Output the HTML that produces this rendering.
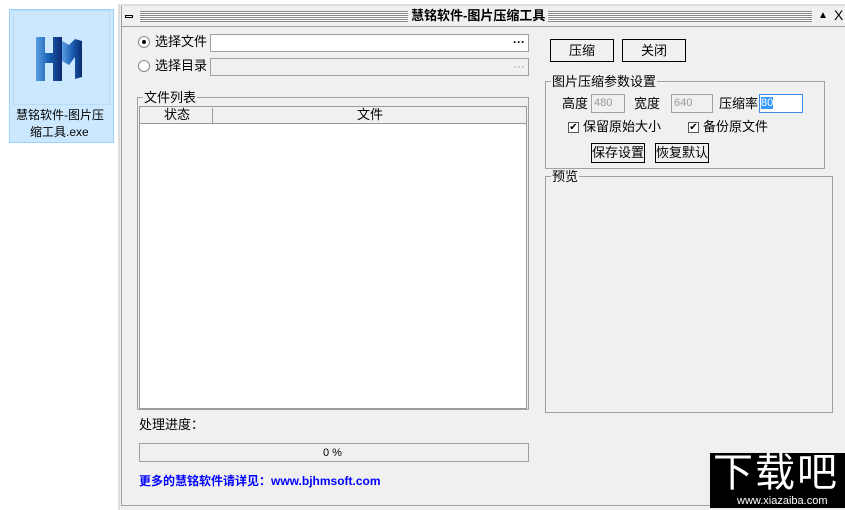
<!DOCTYPE html>
<html><head><meta charset="utf-8"><style>
*{margin:0;padding:0;box-sizing:border-box}
body{width:845px;height:508px;background:#fff;position:relative;overflow:hidden;font-family:"Liberation Sans","Noto Sans CJK SC",sans-serif;font-size:12px;color:#000}
.a{position:absolute}
.t{position:absolute;white-space:nowrap;line-height:14px}
.inp{position:absolute;background:#fff;border:1px solid #a0a0a0}
.btn{position:absolute;border:1px solid #000;background:#f0f0f0;text-align:center}
.hatch{position:absolute;height:11px;background:repeating-linear-gradient(#888 0 1px,#fff 1px 2px)}
.cb{position:absolute;width:11px;height:11px;border:1px solid #555;background:#fff;font-size:10px;line-height:9px;text-align:center}
</style></head><body>
<div class="a" style="left:9px;top:9px;width:105px;height:134px;background:#cce8ff;border:1px solid #99d1ff"></div>
<div class="a" style="left:13px;top:10px;width:97px;height:95px;border:1px solid #b9dcf4"></div>
<svg class="a" style="left:34px;top:35px" width="50" height="48" viewBox="0 0 50 48">
<defs><linearGradient id="g" x1="0" x2="1"><stop offset="0" stop-color="#5aa0e0"/><stop offset="0.5" stop-color="#1a5fb4"/><stop offset="1" stop-color="#0a2a70"/></linearGradient></defs>
<path d="M2 2h9v16h8V2h9v44h-9V28h-8v18H2z" fill="url(#g)"/>
<path d="M28 6l7 4 6-6 7 2v36l-7 2V22l-6 8-7-4z" fill="url(#g)"/>
</svg>
<div class="t" style="left:16px;top:108px;font-size:12px">慧铭软件-图片压</div>
<div class="t" style="left:30px;top:125px">缩工具.exe</div>

<div class="a" style="left:118px;top:4px;width:740px;height:506px;background:#f0f0f0;border-left:2px solid #ddd;border-top:2px solid #ddd"></div>
<div class="a" style="left:121px;top:6px;width:730px;height:500px;border-left:1px solid #a0a0a0;border-bottom:1px solid #a0a0a0"></div>
<div class="a" style="left:125px;top:15px;width:8px;height:3px;border:1px solid #000"></div>
<div class="hatch" style="left:140px;top:11px;width:268px"></div>
<div class="t" style="left:411px;top:9px;font-weight:bold;font-size:13px">慧铭软件-图片压缩工具</div>
<div class="hatch" style="left:548px;top:11px;width:264px"></div>
<div class="t" style="left:818px;top:9px;font-size:10px">▲</div>
<div class="t" style="left:834px;top:8px;font-size:14px">X</div>
<div class="a" style="left:122px;top:26px;width:730px;height:1px;background:#a0a0a0"></div>

<div class="a" style="left:138px;top:36px;width:12px;height:12px;border-radius:50%;border:1px solid #888;background:#fff"><div class="a" style="left:3px;top:3px;width:4px;height:4px;border-radius:50%;background:#000"></div></div>
<div class="t" style="left:155px;top:35px;font-size:13px">选择文件</div>
<div class="inp" style="left:210px;top:34px;width:319px;height:18px"></div>
<div class="t" style="left:513px;top:35px;font-weight:bold">···</div>
<div class="a" style="left:138px;top:60px;width:12px;height:12px;border-radius:50%;border:1px solid #888;background:#fff"></div>
<div class="t" style="left:155px;top:59px;font-size:13px">选择目录</div>
<div class="inp" style="left:210px;top:58px;width:319px;height:18px;background:#f0f0f0"></div>
<div class="t" style="left:513px;top:59px;color:#999">···</div>

<div class="a" style="left:137px;top:97px;width:392px;height:313px;border:1px solid #a0a0a0"></div>
<div class="t" style="left:143px;top:91px;background:#f0f0f0;font-size:13px;padding:0 1px">文件列表</div>
<div class="a" style="left:139px;top:106px;width:388px;height:303px;background:#fff;border:1px solid #999"></div>
<div class="a" style="left:140px;top:107px;width:386px;height:17px;background:#f0f0f0;border-bottom:1px solid #999"></div>
<div class="a" style="left:212px;top:108px;width:1px;height:15px;background:#999"></div>
<div class="t" style="left:164px;top:108px;font-size:13px">状态</div>
<div class="t" style="left:357px;top:108px;font-size:13px">文件</div>

<div class="t" style="left:139px;top:418px;font-size:13px">处理进度：</div>
<div class="a" style="left:139px;top:443px;width:390px;height:19px;border:1px solid #a0a0a0"></div>
<div class="t" style="left:323px;top:446px;font-size:11px">0 %</div>
<div class="t" style="left:139px;top:474px;color:#0000ff;font-weight:bold;font-size:12px">更多的慧铭软件请详见：www.bjhmsoft.com</div>

<div class="btn" style="left:550px;top:39px;width:64px;height:23px;line-height:21px;font-size:13px">压缩</div>
<div class="btn" style="left:622px;top:39px;width:64px;height:23px;line-height:21px;font-size:13px">关闭</div>

<div class="a" style="left:545px;top:81px;width:280px;height:88px;border:1px solid #a0a0a0"></div>
<div class="t" style="left:551px;top:75px;background:#f0f0f0;font-size:13px;padding:0 1px">图片压缩参数设置</div>
<div class="t" style="left:562px;top:97px;font-size:13px">高度</div>
<div class="inp" style="left:591px;top:94px;width:34px;height:19px;background:#f0f0f0;color:#999;font-size:11px;padding:2px">480</div>
<div class="t" style="left:634px;top:97px;font-size:13px">宽度</div>
<div class="inp" style="left:671px;top:94px;width:42px;height:19px;background:#f0f0f0;color:#999;font-size:11px;padding:2px">640</div>
<div class="t" style="left:719px;top:97px;font-size:13px">压缩率</div>
<div class="inp" style="left:759px;top:94px;width:44px;height:19px;border-color:#3c8ce6;font-size:11px;padding:2px 1px"><span style="background:#3399ff;color:#fff">80</span></div>
<div class="cb" style="left:568px;top:122px">✔</div>
<div class="t" style="left:583px;top:120px;font-size:13px">保留原始大小</div>
<div class="cb" style="left:688px;top:122px">✔</div>
<div class="t" style="left:703px;top:120px;font-size:13px">备份原文件</div>
<div class="btn" style="left:591px;top:143px;width:54px;height:20px;line-height:18px;font-size:13px">保存设置</div>
<div class="btn" style="left:655px;top:143px;width:54px;height:20px;line-height:18px;font-size:13px">恢复默认</div>

<div class="a" style="left:545px;top:176px;width:288px;height:237px;border:1px solid #a0a0a0"></div>
<div class="t" style="left:551px;top:170px;background:#f0f0f0;font-size:13px;padding:0 1px">预览</div>

<div class="a" style="left:710px;top:453px;width:135px;height:55px;background:#000"></div>
<div class="t" style="left:713px;top:451px;color:#fff;font-size:40px;line-height:44px;letter-spacing:2px">下载吧</div>
<div class="t" style="left:737px;top:495px;color:#fff;font-size:11px;line-height:12px">www.xiazaiba.com</div>
</body></html>
